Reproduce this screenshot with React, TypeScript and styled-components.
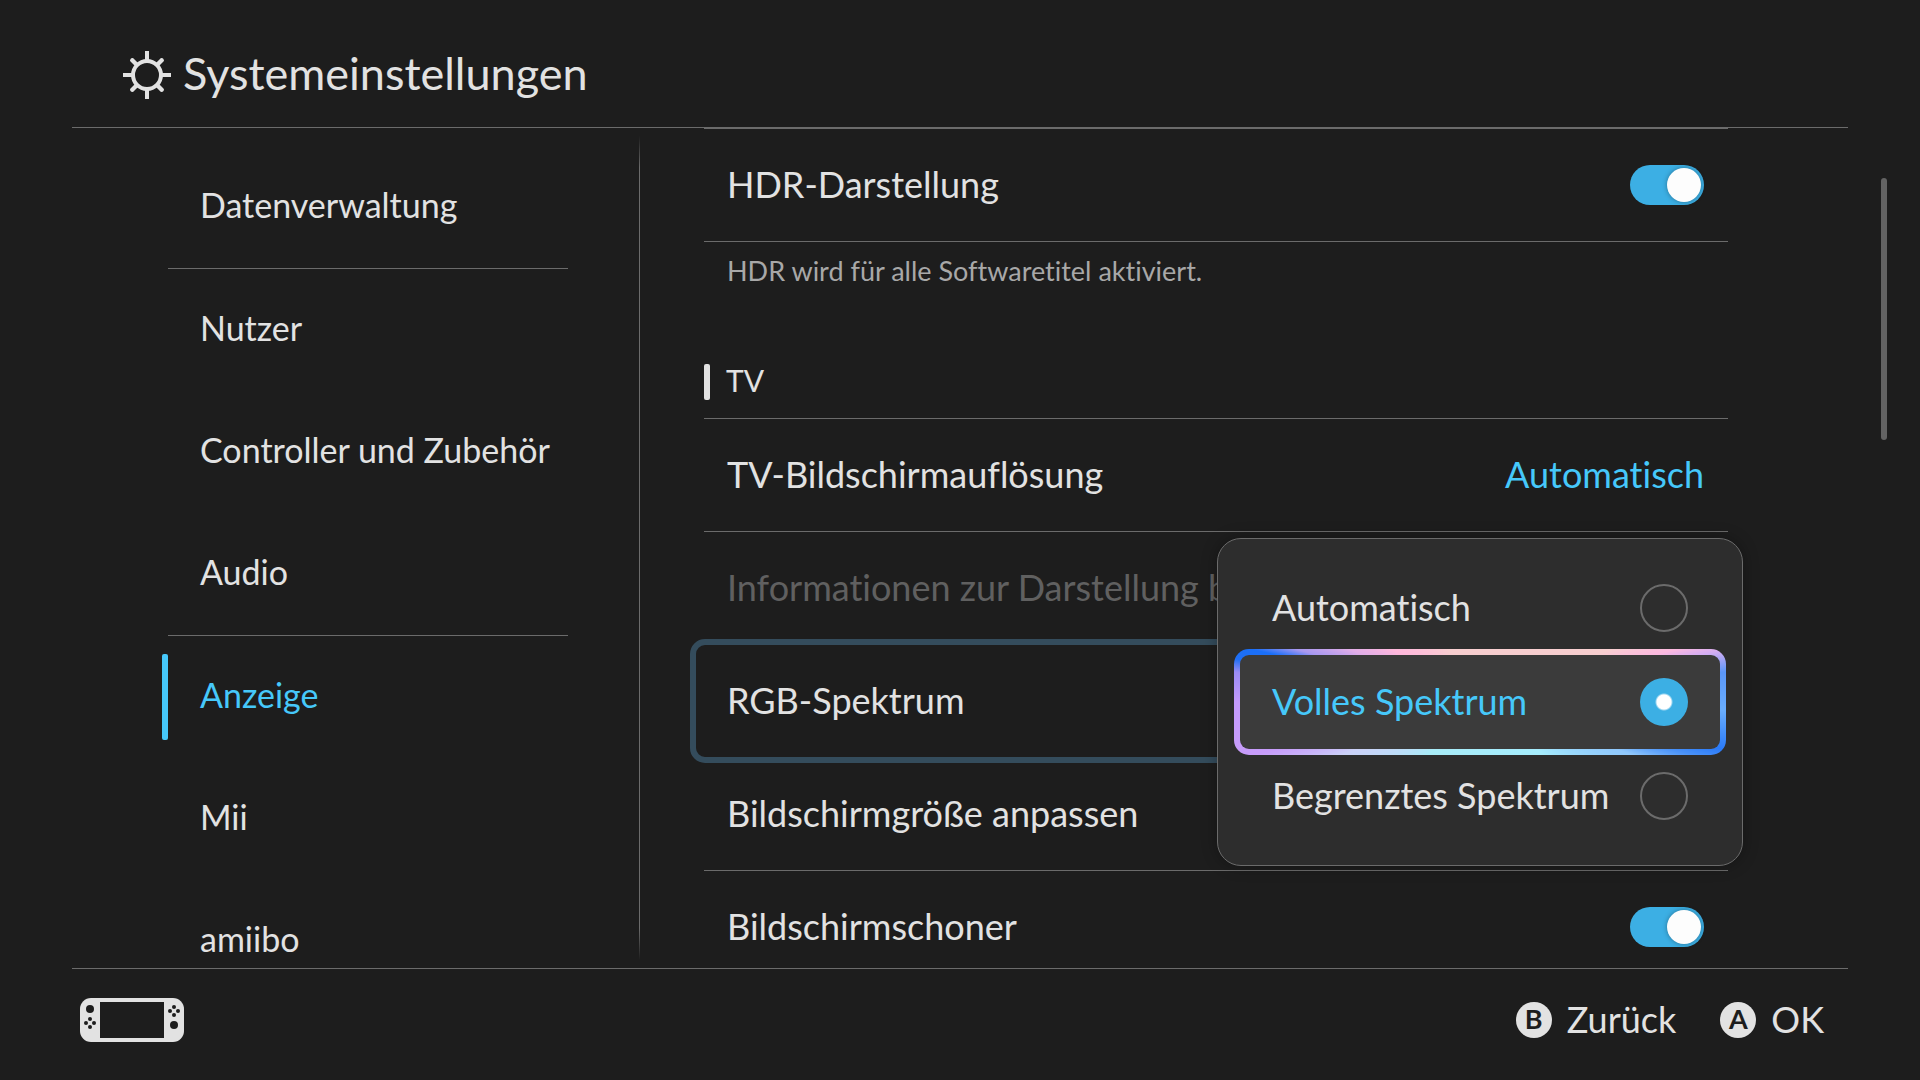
import React, { useState } from 'react';
import styled, { createGlobalStyle, css } from 'styled-components';

const color = {
  page: '#1d1d1d',
  panel: '#2d2d2d',
  panelActive: '#3b3b3b',
  line: '#6b6b6b',
  text: '#e2e2e2',
  note: '#a8a8a8',
  disabled: '#606060',
  accent: '#46c8fa',
  control: '#3cafe4',
  heldFocus: '#344c5c',
};

const GlobalStyle = createGlobalStyle`
  *, *::before, *::after { box-sizing: border-box; }
  body {
    margin: 0;
    background: ${color.page};
    color: ${color.text};
    font-family: Lato, "Noto Sans", sans-serif;
    font-variant-ligatures: none;
  }
  button, input { font: inherit; color: inherit; margin: 0; }
  ul { list-style: none; margin: 0; padding: 0; }
`;

const Screen = styled.div`
  display: grid;
  grid-template-rows: auto minmax(0, 1fr) auto;
  height: 100vh;
`;

const Header = styled.header`
  display: flex;
  align-items: center;
  gap: 12px;
  margin: 0 72px;
  padding: 51px 51px 28px;
  border-bottom: 1px solid ${color.line};
`;

const Title = styled.h1`
  margin: 0;
  padding-bottom: 3px;
  font-size: 45px;
  font-weight: 400;
  line-height: 43px;
`;

const Main = styled.main`
  display: grid;
  grid-template-columns: 639px 1px minmax(0, 1fr) 6px;
  grid-template-rows: minmax(0, 1fr);
  padding-right: 33px;
  overflow: hidden;
`;

const Sidebar = styled.nav`
  padding: 18px 71px 0 168px;
`;

const SidebarItem = styled.li<{ $closesGroup?: boolean }>`
  border-bottom: ${p => (p.$closesGroup ? `1px solid ${color.line}` : 'none')};
`;

const SidebarLink = styled.a<{ $active?: boolean }>`
  position: relative;
  display: flex;
  align-items: center;
  height: 122px;
  padding: 0 0 4px 32px;
  color: ${p => (p.$active ? color.accent : color.text)};
  font-size: 34px;
  line-height: 40px;
  text-decoration: none;
  white-space: nowrap;

  ${p =>
    p.$active &&
    css`
      &::before {
        content: '';
        position: absolute;
        left: -6px;
        top: 18px;
        bottom: 18px;
        width: 6px;
        border-radius: 2px;
        background: ${color.accent};
      }
    `}
`;

const Divider = styled.div`
  margin: 8px 0;
  background: linear-gradient(transparent, ${color.line} 32px, ${color.line} calc(100% - 32px), transparent);
`;

const Content = styled.section`
  padding: 0 153px 0 64px;
`;

const Rows = styled.ul`
  border-top: 1px solid ${color.line};
`;

const Row = styled.li`
  position: relative;
  height: 113px;
  border-bottom: 1px solid ${color.line};
`;

const rowBody = css`
  display: flex;
  align-items: center;
  justify-content: space-between;
  width: 100%;
  height: 112px;
  padding: 0 24px 0 23px;
  border: 0;
  background: none;
  font-size: 36px;
  line-height: 42px;
  text-align: left;
  white-space: nowrap;
`;

const SwitchRow = styled.label`
  ${rowBody}
`;

const ButtonRow = styled.button<{ $held?: boolean }>`
  ${rowBody}

  &:disabled {
    color: ${color.disabled};
  }

  ${p =>
    p.$held &&
    css`
      position: relative;
      z-index: 1;

      &::before {
        content: '';
        position: absolute;
        inset: -6px -14px;
        border: 6px solid ${color.heldFocus};
        border-radius: 15px;
      }
    `}
`;

const RowText = styled.span`
  padding-bottom: 2px;
`;

const RowValue = styled(RowText)`
  color: ${color.accent};
`;

const Switch = styled.input`
  appearance: none;
  display: flex;
  align-items: center;
  justify-content: flex-start;
  width: 74px;
  height: 40px;
  padding: 3px;
  border-radius: 20px;
  background: ${color.line};

  &::after {
    content: '';
    width: 34px;
    height: 34px;
    border-radius: 50%;
    background: #fdfdfd;
    box-shadow: 0 0 5px rgba(0, 0, 0, 0.35);
  }

  &:checked {
    justify-content: flex-end;
    background: ${color.control};
  }
`;

const Note = styled.p`
  margin: 0;
  padding: 11px 23px 0;
  color: ${color.note};
  font-size: 27px;
  line-height: 36px;
`;

const SectionTitle = styled.h2`
  display: flex;
  align-items: center;
  gap: 16px;
  margin: 75px 0 18px;
  font-size: 30px;
  font-weight: 400;
  line-height: 32px;

  &::before {
    content: '';
    width: 6px;
    height: 36px;
    border-radius: 2px;
    background: ${color.text};
  }
`;

const SectionText = styled.span`
  padding-bottom: 4px;
`;

const Popup = styled.div`
  position: absolute;
  z-index: 2;
  top: -107px;
  right: -15px;
  width: 526px;
  padding: 22px 16px;
  border: 1px solid ${color.line};
  border-radius: 24px;
  background: ${color.panel};
  box-shadow: 0 0 16px rgba(0, 0, 0, 0.3);
`;

const Option = styled.label<{ $selected: boolean }>`
  position: relative;
  display: flex;
  align-items: center;
  justify-content: space-between;
  height: 94px;
  padding: 0 38px;
  color: ${p => (p.$selected ? color.accent : color.text)};
  font-size: 36px;
  line-height: 42px;
  white-space: nowrap;

  ${p =>
    p.$selected &&
    css`
      &::before {
        content: '';
        position: absolute;
        z-index: -1;
        inset: -6px 0;
        border: 6px solid transparent;
        border-radius: 15px;
        background:
          linear-gradient(${color.panelActive}, ${color.panelActive}) padding-box,
          conic-gradient(
            #f8cfd0 0deg, #f8cfd0 68deg, #fcb9e0 75deg, #d3adf3 78deg, #5b97f9 83deg,
            #69adfc 92deg, #2a7af8 101deg, #4a92f8 104deg, #90c8fc 109deg, #a6edfd 130deg,
            #a8ecf8 224deg, #cbd2f8 249deg, #c79cfa 257deg, #c49bfd 270deg, #9a8cf5 277deg,
            #1f6ff5 280deg, #1a6ff8 283deg, #a898f0 286deg, #e2aee8 292deg, #ffb8dc 301deg,
            #f8cfd0 330deg, #f8cfd0 360deg
          ) border-box;
      }
    `}
`;

const Radio = styled.input`
  appearance: none;
  width: 48px;
  height: 48px;
  border: 2px solid ${color.line};
  border-radius: 50%;

  &:checked {
    border: 0;
    background: radial-gradient(circle, #fff 7px, ${color.control} 9px);
  }
`;

const ScrollThumb = styled.div`
  width: 6px;
  height: 262px;
  margin-top: 50px;
  border-radius: 3px;
  background: #636363;
`;

const Footer = styled.footer`
  display: flex;
  align-items: center;
  justify-content: space-between;
  margin: 0 72px;
  padding: 29px 24px 38px 8px;
  border-top: 1px solid ${color.line};
`;

const Hints = styled.div`
  display: flex;
  gap: 44px;
`;

const Hint = styled.button`
  display: flex;
  align-items: center;
  gap: 15px;
  padding: 0;
  border: 0;
  background: none;
  font-size: 36px;
  line-height: 40px;
`;

const KeyCap = styled.span`
  display: grid;
  place-items: center;
  width: 36px;
  height: 36px;
  padding-bottom: 2px;
  border-radius: 50%;
  background: ${color.text};
  color: ${color.page};
  font-size: 27px;
  font-weight: 700;
  line-height: 34px;
`;

function SettingsIcon() {
  return (
    <svg width="48" height="48" viewBox="0 0 48 48" fill="none" stroke={color.text} strokeWidth="4" aria-hidden="true">
      <circle cx="24" cy="24" r="14" />
      {[0, 45, 90, 135, 180, 225, 270, 315].map(a => (
        <path key={a} d={a % 90 ? 'M24 9V2' : 'M24 9V0'} transform={`rotate(${a} 24 24)`} />
      ))}
      <g strokeLinecap="round">
        {[45, 135, 225, 315].map(a => (
          <path key={a} d="M24 9V3" transform={`rotate(${a} 24 24)`} />
        ))}
      </g>
    </svg>
  );
}

const cross = (x: number, y: number) => [[x, y - 4], [x, y + 4], [x - 4, y], [x + 4, y]];

function ConsoleIcon() {
  return (
    <svg width="104" height="44" viewBox="0 0 104 44" aria-label="Konsole" role="img">
      <rect width="104" height="44" rx="11" fill={color.text} />
      <g fill={color.page}>
        <rect x="20" y="4" width="64" height="36" />
        <circle cx="10" cy="11" r="4" />
        <circle cx="94" cy="27" r="4" />
        {[...cross(10, 25), ...cross(94, 13)].map(([x, y]) => (
          <circle key={`${x}-${y}`} cx={x} cy={y} r="2" />
        ))}
      </g>
    </svg>
  );
}

const sections = [
  { name: 'Datenverwaltung', closesGroup: true },
  { name: 'Nutzer' },
  { name: 'Controller und Zubehör' },
  { name: 'Audio', closesGroup: true },
  { name: 'Anzeige' },
  { name: 'Mii' },
  { name: 'amiibo' },
];

const spectra = ['Automatisch', 'Volles Spektrum', 'Begrenztes Spektrum'];

export default function App() {
  const [hdr, setHdr] = useState(true);
  const [saver, setSaver] = useState(true);
  const [spectrum, setSpectrum] = useState('Volles Spektrum');

  return (
    <>
      <GlobalStyle />
      <Screen>
        <Header>
          <SettingsIcon />
          <Title>Systemeinstellungen</Title>
        </Header>

        <Main>
          <Sidebar>
            <ul>
              {sections.map(s => (
                <SidebarItem key={s.name} $closesGroup={s.closesGroup}>
                  <SidebarLink href="#" $active={s.name === 'Anzeige'}>{s.name}</SidebarLink>
                </SidebarItem>
              ))}
            </ul>
          </Sidebar>
          <Divider />
          <Content>
            <Rows>
              <Row>
                <SwitchRow>
                  <RowText>HDR-Darstellung</RowText>
                  <Switch type="checkbox" role="switch" checked={hdr} onChange={e => setHdr(e.target.checked)} />
                </SwitchRow>
              </Row>
            </Rows>
            <Note>HDR wird für alle Softwaretitel aktiviert.</Note>
            <SectionTitle><SectionText>TV</SectionText></SectionTitle>
            <Rows>
              <Row>
                <ButtonRow type="button">
                  <RowText>TV-Bildschirmauflösung</RowText>
                  <RowValue>Automatisch</RowValue>
                </ButtonRow>
              </Row>
              <Row>
                <ButtonRow type="button" disabled>
                  <RowText>Informationen zur Darstellung b</RowText>
                </ButtonRow>
              </Row>
              <Row>
                <ButtonRow type="button" $held aria-expanded="true">
                  <RowText>RGB-Spektrum</RowText>
                </ButtonRow>
                <Popup role="radiogroup" aria-label="RGB-Spektrum">
                  {spectra.map(name => (
                    <Option key={name} $selected={name === spectrum}>
                      <RowText>{name}</RowText>
                      <Radio type="radio" name="spectrum" checked={name === spectrum} onChange={() => setSpectrum(name)} />
                    </Option>
                  ))}
                </Popup>
              </Row>
              <Row>
                <ButtonRow type="button">
                  <RowText>Bildschirmgröße anpassen</RowText>
                </ButtonRow>
              </Row>
              <Row>
                <SwitchRow>
                  <RowText>Bildschirmschoner</RowText>
                  <Switch type="checkbox" role="switch" checked={saver} onChange={e => setSaver(e.target.checked)} />
                </SwitchRow>
              </Row>
            </Rows>
          </Content>
          <ScrollThumb />
        </Main>

        <Footer>
          <ConsoleIcon />
          <Hints>
            <Hint type="button"><KeyCap>B</KeyCap><RowText>Zurück</RowText></Hint>
            <Hint type="button"><KeyCap>A</KeyCap><RowText>OK</RowText></Hint>
          </Hints>
        </Footer>
      </Screen>
    </>
  );
}
